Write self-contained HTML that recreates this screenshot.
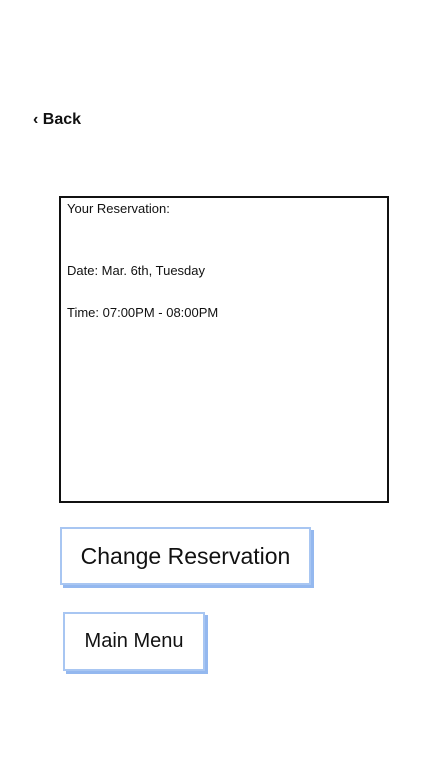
<html><head><style>
body{margin:0;width:447px;height:764px;background:#fff;font-family:"Liberation Sans",sans-serif;position:relative;overflow:hidden}
.a{position:absolute}
.btn{position:absolute;border:2px solid #a8c6f2;box-shadow:3px 3px 0 #94b8ef;background:#fff;color:#111;display:flex;align-items:center;justify-content:center}
</style></head><body>
<div class="a" style="left:33px;top:111px;font-size:16px;color:#111;font-weight:bold">&lsaquo; Back</div>
<div class="a" style="left:59px;top:196px;width:326px;height:303px;border:2px solid #111"></div>
<div class="a" style="left:67px;top:201px;font-size:13px;color:#111">Your Reservation:</div>
<div class="a" style="left:67px;top:263px;font-size:13px;color:#111">Date: Mar. 6th, Tuesday</div>
<div class="a" style="left:67px;top:305px;font-size:13px;color:#111">Time: 07:00PM - 08:00PM</div>
<div class="btn" style="left:60px;top:527px;width:247px;height:54px;font-size:23px;">Change Reservation</div>
<div class="btn" style="left:63px;top:612px;width:138px;height:55px;font-size:20px;">Main Menu</div>
</body></html>
